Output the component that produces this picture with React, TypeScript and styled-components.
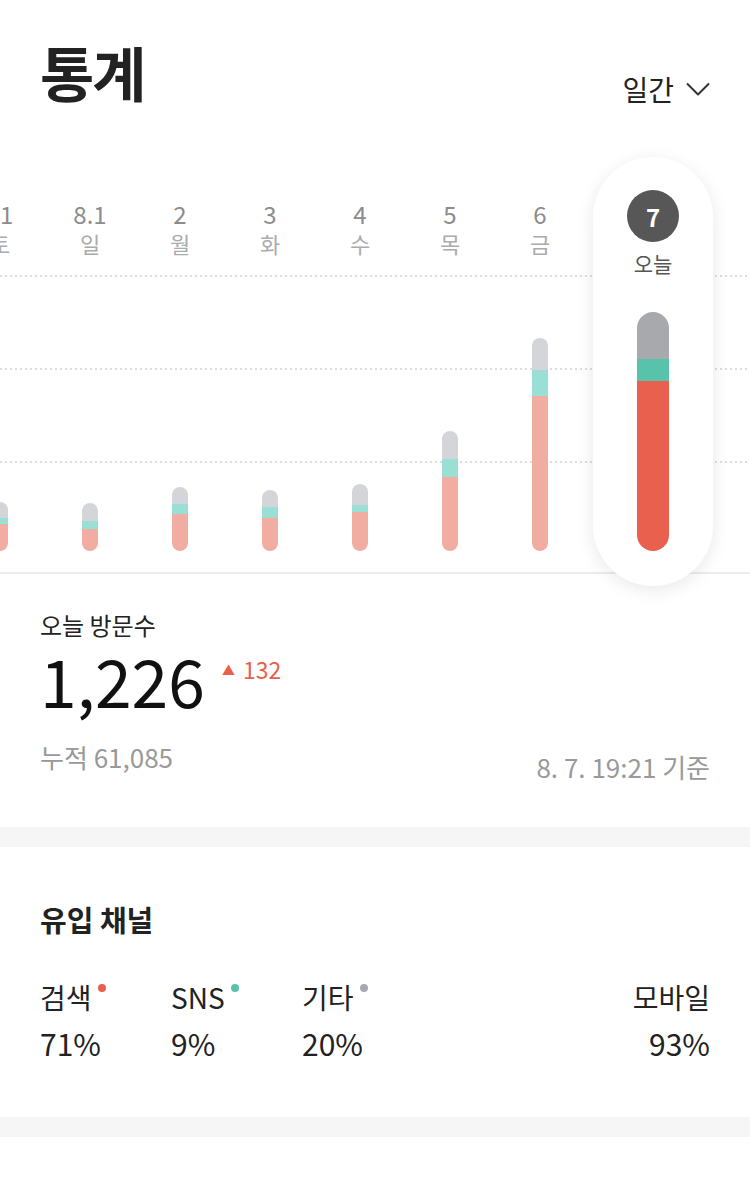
import React, { FC } from 'react';
import styled, { createGlobalStyle } from 'styled-components';

const GlobalStyle = createGlobalStyle`
    html, body {
        margin: 0;
        padding: 0;
        background: #fff;
    }

    body {
        font-family: 'Noto Sans CJK KR', 'Noto Sans', sans-serif;
        color: #222;
        -webkit-font-smoothing: antialiased;
    }
`;

type Day = {
    num: string;
    week: string;
    gray: number;
    teal: number;
    red: number;
};

const days: Day[] = [
    { num: '31', week: '토', gray: 16, teal: 6, red: 27 },
    { num: '8.1', week: '일', gray: 18, teal: 8, red: 22 },
    { num: '2', week: '월', gray: 17, teal: 10, red: 37 },
    { num: '3', week: '화', gray: 17, teal: 11, red: 33 },
    { num: '4', week: '수', gray: 21, teal: 7, red: 39 },
    { num: '5', week: '목', gray: 28, teal: 18, red: 74 },
    { num: '6', week: '금', gray: 32, teal: 26, red: 155 },
];

const today = { num: '7', gray: 47, teal: 22, red: 170 };

const channels = [
    { name: '검색', value: '71%', color: '#e9604f' },
    { name: 'SNS', value: '9%', color: '#58c2ab' },
    { name: '기타', value: '20%', color: '#a6a9b0' },
];

const Page = styled.div`
    width: 750px;
    min-height: 1188px;
    background: #fff;
    overflow: hidden;
`;

const Header = styled.header`
    display: flex;
    align-items: flex-end;
    justify-content: space-between;
    padding: 38px 40px 0 40px;
`;

const Title = styled.h1`
    margin: 0;
    font-size: 59px;
    line-height: 68px;
    font-weight: 700;
    letter-spacing: -2px;
    color: #222;
`;

const PeriodSelect = styled.button`
    display: flex;
    align-items: center;
    gap: 12px;
    padding: 0;
    border: 0;
    background: none;
    font-family: inherit;
    font-size: 28px;
    line-height: 34px;
    color: #222;
`;

const Chart = styled.section`
    position: relative;
    margin-top: 41px;
    overflow: hidden;
`;

const GridLayer = styled.div`
    position: absolute;
    top: 128px;
    left: 0;
    right: 0;
    display: flex;
    flex-direction: column;
    gap: 91px;
`;

const DottedLine = styled.div`
    height: 2px;
    background-image: linear-gradient(to right, #dcdcdc 2px, transparent 2px);
    background-size: 5px 2px;
    background-repeat: repeat-x;
`;

const BaseLine = styled.div`
    height: 2px;
    margin-top: 18px;
    background: #ececec;
`;

const Columns = styled.div`
    position: relative;
    display: flex;
    height: 429px;
    margin-left: -45px;
    padding: 10px 0 20px 0;
`;

const Column = styled.div`
    width: 90px;
    flex: none;
    display: flex;
    flex-direction: column;
    align-items: center;
    padding: 43px 0 35px 0;
`;

const TodayColumn = styled(Column)`
    width: 120px;
    margin-left: 8px;
    padding-top: 33px;
    border-radius: 60px;
    background: #fff;
    box-shadow: 0 4px 18px rgba(0, 0, 0, 0.09);
`;

const DayNum = styled.span`
    font-size: 24px;
    line-height: 28px;
    color: #8c8c8c;
`;

const WeekDay = styled.span`
    margin-top: 2px;
    font-size: 22px;
    line-height: 26px;
    color: #ababab;
`;

const TodayBadge = styled.span`
    width: 52px;
    height: 52px;
    border-radius: 50%;
    background: #575757;
    color: #fff;
    display: flex;
    align-items: center;
    justify-content: center;
    font-size: 24px;
    font-weight: 700;
`;

const TodayLabel = styled.span`
    margin-top: 9px;
    font-size: 21px;
    line-height: 24px;
    color: #555;
`;

const Bar = styled.div<{ $wide?: boolean }>`
    margin-top: auto;
    width: ${(p) => (p.$wide ? 32 : 16)}px;
    border-radius: ${(p) => (p.$wide ? 16 : 8)}px;
    overflow: hidden;
    display: flex;
    flex-direction: column;
`;

const Segment = styled.div<{ $color: string }>`
    background: ${(p) => p.$color};
`;

const Visits = styled.section`
    padding: 4px 40px 44px 40px;
`;

const VisitsLabel = styled.div`
    font-size: 24px;
    line-height: 30px;
    color: #222;
`;

const VisitsRow = styled.div`
    display: flex;
    align-items: flex-start;
    margin-top: 3px;
`;

const VisitsCount = styled.span`
    font-size: 66px;
    line-height: 72px;
    color: #111;
`;

const Delta = styled.span`
    display: flex;
    align-items: center;
    gap: 8px;
    margin: 12px 0 0 17px;
    font-size: 23px;
    line-height: 28px;
    color: #e8604c;
`;

const DeltaArrow = styled.span`
    font-size: 13px;
    line-height: 13px;
`;

const VisitsFooter = styled.div`
    display: flex;
    align-items: flex-start;
    justify-content: space-between;
    margin-top: 26px;
    font-size: 26px;
    line-height: 32px;
    color: #999;
`;

const UpdatedAt = styled.span`
    margin-top: 10px;
`;

const Divider = styled.div`
    height: 20px;
    background: #f6f6f6;
`;

const Channels = styled.section`
    padding: 55px 40px 56px 40px;
`;

const SectionTitle = styled.h2`
    margin: 0;
    font-size: 29px;
    line-height: 34px;
    font-weight: 700;
    color: #222;
`;

const ChannelRow = styled.div`
    display: flex;
    margin-top: 44px;
`;

const ChannelItem = styled.div<{ $right?: boolean }>`
    width: 131px;
    display: flex;
    flex-direction: column;
    align-items: ${(p) => (p.$right ? 'flex-end' : 'flex-start')};
    margin-left: ${(p) => (p.$right ? 'auto' : '0')};
`;

const ChannelName = styled.div`
    display: flex;
    align-items: flex-start;
    font-size: 28px;
    line-height: 34px;
    color: #222;
`;

const Dot = styled.span<{ $color: string }>`
    width: 8px;
    height: 8px;
    margin: 4px 0 0 6px;
    border-radius: 50%;
    background: ${(p) => p.$color};
`;

const ChannelValue = styled.div`
    margin-top: 11px;
    font-size: 30px;
    line-height: 36px;
    color: #222;
`;

const Chevron: FC = () => (
    <svg width="24" height="14" viewBox="0 0 24 14" fill="none">
        <polyline points="1,1.5 12,12.5 23,1.5" stroke="#333" strokeWidth="2" strokeLinejoin="round" />
    </svg>
);

const StackBar: FC<{ gray: number; teal: number; red: number; active?: boolean }> = ({ gray, teal, red, active }) => (
    <Bar $wide={active}>
        <Segment $color={active ? '#a7a9ad' : '#d4d5d8'} style={{ height: gray }} />
        <Segment $color={active ? '#58c2ab' : '#99dfd4'} style={{ height: teal }} />
        <Segment $color={active ? '#e9604f' : '#f2ada3'} style={{ height: red }} />
    </Bar>
);

const App: FC = () => {
    return (
        <Page>
            <GlobalStyle />
            <Header>
                <Title>통계</Title>
                <PeriodSelect>
                    일간
                    <Chevron />
                </PeriodSelect>
            </Header>

            <Chart>
                <GridLayer>
                    <DottedLine />
                    <DottedLine />
                    <DottedLine />
                    <BaseLine />
                </GridLayer>
                <Columns>
                    {days.map((day) => (
                        <Column key={day.num}>
                            <DayNum>{day.num}</DayNum>
                            <WeekDay>{day.week}</WeekDay>
                            <StackBar gray={day.gray} teal={day.teal} red={day.red} />
                        </Column>
                    ))}
                    <TodayColumn>
                        <TodayBadge>{today.num}</TodayBadge>
                        <TodayLabel>오늘</TodayLabel>
                        <StackBar gray={today.gray} teal={today.teal} red={today.red} active />
                    </TodayColumn>
                </Columns>
            </Chart>

            <Visits>
                <VisitsLabel>오늘 방문수</VisitsLabel>
                <VisitsRow>
                    <VisitsCount>1,226</VisitsCount>
                    <Delta>
                        <DeltaArrow>▲</DeltaArrow>
                        132
                    </Delta>
                </VisitsRow>
                <VisitsFooter>
                    <span>누적 61,085</span>
                    <UpdatedAt>8. 7. 19:21 기준</UpdatedAt>
                </VisitsFooter>
            </Visits>

            <Divider />

            <Channels>
                <SectionTitle>유입 채널</SectionTitle>
                <ChannelRow>
                    {channels.map((ch) => (
                        <ChannelItem key={ch.name}>
                            <ChannelName>
                                {ch.name}
                                <Dot $color={ch.color} />
                            </ChannelName>
                            <ChannelValue>{ch.value}</ChannelValue>
                        </ChannelItem>
                    ))}
                    <ChannelItem $right>
                        <ChannelName>모바일</ChannelName>
                        <ChannelValue>93%</ChannelValue>
                    </ChannelItem>
                </ChannelRow>
            </Channels>

            <Divider />
        </Page>
    );
};

export default App;
